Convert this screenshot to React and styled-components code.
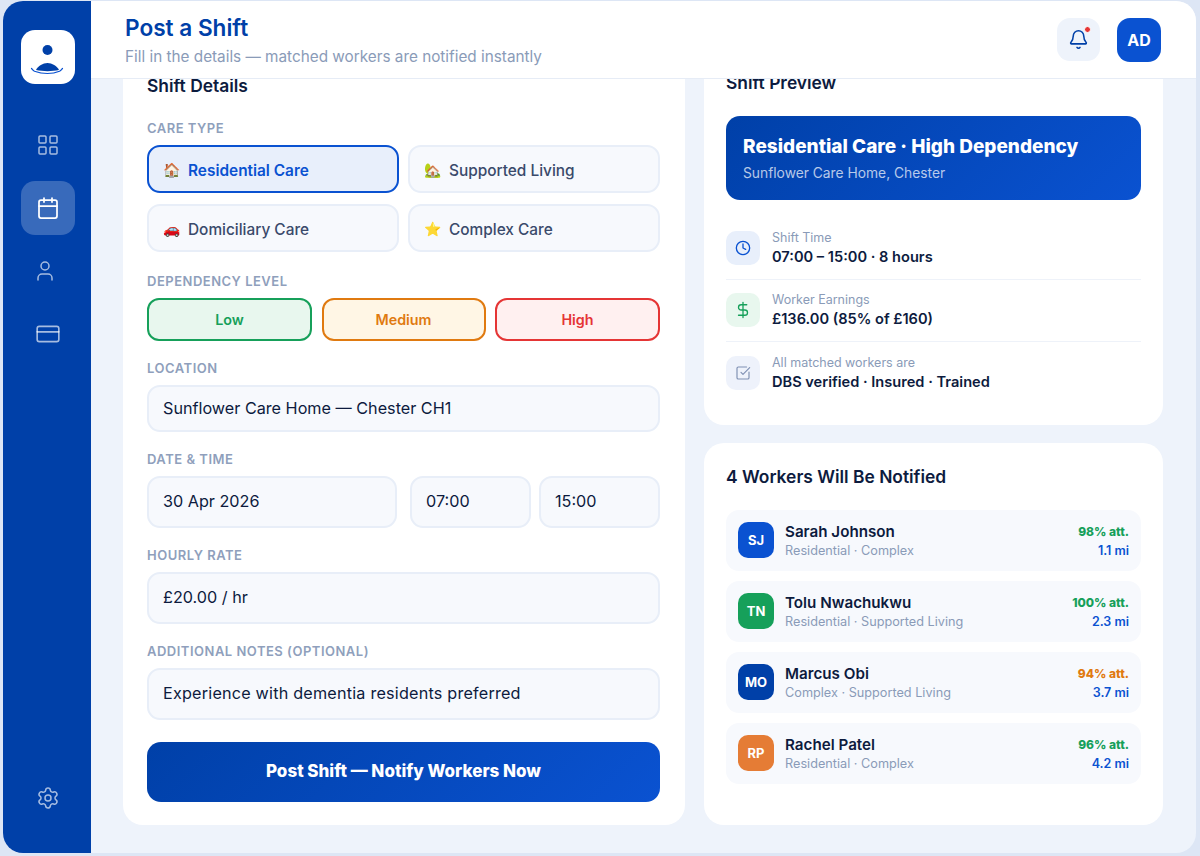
import { useEffect, useRef } from "react";
import styled, { createGlobalStyle } from "styled-components";
import { Bell, Calendar, Clock, CreditCard, DollarSign, LayoutGrid, Settings, SquareCheckBig, User } from "lucide-react";

const careTypes = [
    { icon: "🏠", name: "Residential Care", selected: true },
    { icon: "🏡", name: "Supported Living" },
    { icon: "🚗", name: "Domiciliary Care" },
    { icon: "⭐", name: "Complex Care" },
];

const levels = [
    { name: "Low", color: "#16a05a", bg: "#e8f7ee" },
    { name: "Medium", color: "#e07a10", bg: "#fff6e5" },
    { name: "High", color: "#e53535", bg: "#fff0f0" },
];

const workers = [
    { initials: "SJ", name: "Sarah Johnson", skills: "Residential · Complex", att: "98% att.", attColor: "#16a05a", miles: "1.1 mi", color: "#0a52d1" },
    { initials: "TN", name: "Tolu Nwachukwu", skills: "Residential · Supported Living", att: "100% att.", attColor: "#16a05a", miles: "2.3 mi", color: "#16a05a" },
    { initials: "MO", name: "Marcus Obi", skills: "Complex · Supported Living", att: "94% att.", attColor: "#e07a10", miles: "3.7 mi", color: "#0040a8" },
    { initials: "RP", name: "Rachel Patel", skills: "Residential · Complex", att: "96% att.", attColor: "#16a05a", miles: "4.2 mi", color: "#e57c35" },
];

const App = () => {
    const scroller = useRef(null);

    // the page is shown scrolled down to the end of the form
    useEffect(() => {
        scroller.current.scrollTop = scroller.current.scrollHeight;
    }, []);

    return (
        <Shell>
            <GlobalStyle />
            <Frame>
                <Sidebar>
                    <Logo>
                        <svg width="54" height="54" viewBox="0 0 54 54">
                            <circle cx="26.5" cy="20" r="5" fill="#0040a8" />
                            <path d="M15 40c2-4 7-7 11.500-7s9.500 3 11.500 7c-7 1.500-16 1.500-23 0z" fill="#0040a8" />
                            <path d="M10.500 38.500c1 1 1.500 2 3 2.700 8 3 18 3 25 0 1.500-.7 2-1.700 3-2.700" fill="none" stroke="#0a52d1" strokeWidth="1.200" strokeLinecap="round" />
                        </svg>
                    </Logo>
                    <NavItem><LayoutGrid size={24} strokeWidth={1.5} /></NavItem>
                    <NavItem $active><Calendar size={24} strokeWidth={1.75} /></NavItem>
                    <NavItem><UserIcon size={24} strokeWidth={1.5} /></NavItem>
                    <NavItem><CreditCard size={26} strokeWidth={1.5} /></NavItem>
                    <NavItem $bottom><Settings size={24} strokeWidth={1.5} /></NavItem>
                </Sidebar>
                <Main>
                    <Header>
                        <div>
                            <PageTitle>Post a Shift</PageTitle>
                            <PageSub>Fill in the details — matched workers are notified instantly</PageSub>
                        </div>
                        <HeaderActions>
                            <BellButton>
                                <Bell size={21} strokeWidth={1.75} />
                                <BellDot />
                            </BellButton>
                            <UserBadge>AD</UserBadge>
                        </HeaderActions>
                    </Header>
                    <Content ref={scroller}>
                        <FormCard>
                            <FormTitle>Shift Details</FormTitle>
                            <Label>CARE TYPE</Label>
                            <CareGrid>
                                {careTypes.map((care) => (
                                    <CareOption key={care.name} $selected={care.selected}>
                                        <Emoji>{care.icon}</Emoji>
                                        {care.name}
                                    </CareOption>
                                ))}
                            </CareGrid>
                            <Label>DEPENDENCY LEVEL</Label>
                            <LevelRow>
                                {levels.map((level) => (
                                    <LevelButton key={level.name} $color={level.color} $bg={level.bg}>{level.name}</LevelButton>
                                ))}
                            </LevelRow>
                            <Label>LOCATION</Label>
                            <Field $short>Sunflower Care Home — Chester CH1</Field>
                            <Label>DATE &amp; TIME</Label>
                            <DateRow>
                                <Field>30 Apr 2026</Field>
                                <Field>07:00</Field>
                                <Field>15:00</Field>
                            </DateRow>
                            <Label>HOURLY RATE</Label>
                            <Field>£20.00 / hr</Field>
                            <Label>ADDITIONAL NOTES (OPTIONAL)</Label>
                            <NotesField>Experience with dementia residents preferred</NotesField>
                            <PostButton>Post Shift — Notify Workers Now</PostButton>
                        </FormCard>
                        <SideColumn>
                            <PreviewCard>
                                <CardTitle>Shift Preview</CardTitle>
                                <Banner>
                                    <BannerTitle>Residential Care · High Dependency</BannerTitle>
                                    <BannerSub>Sunflower Care Home, Chester</BannerSub>
                                </Banner>
                                <InfoList>
                                    <InfoRow>
                                        <InfoIcon $bg="#e8effb" $color="#0a52d1"><Clock size={16} strokeWidth={2} /></InfoIcon>
                                        <div>
                                            <InfoLabel>Shift Time</InfoLabel>
                                            <InfoValue>07:00 – 15:00 · 8 hours</InfoValue>
                                        </div>
                                    </InfoRow>
                                    <InfoRow>
                                        <InfoIcon $bg="#e8f7ee" $color="#16a05a"><DollarSign size={18} strokeWidth={1.75} /></InfoIcon>
                                        <div>
                                            <InfoLabel>Worker Earnings</InfoLabel>
                                            <InfoValue>£136.00 (85% of £160)</InfoValue>
                                        </div>
                                    </InfoRow>
                                    <InfoRow>
                                        <InfoIcon $bg="#eef2fb" $color="#7f90b3"><SquareCheckBig size={16} strokeWidth={1.75} /></InfoIcon>
                                        <div>
                                            <InfoLabel>All matched workers are</InfoLabel>
                                            <InfoValue>DBS verified · Insured · Trained</InfoValue>
                                        </div>
                                    </InfoRow>
                                </InfoList>
                            </PreviewCard>
                            <WorkersCard>
                                <WorkersTitle>4 Workers Will Be Notified</WorkersTitle>
                                <WorkerList>
                                    {workers.map((worker) => (
                                        <WorkerRow key={worker.initials}>
                                            <Avatar $color={worker.color}>{worker.initials}</Avatar>
                                            <WorkerInfo>
                                                <WorkerName>{worker.name}</WorkerName>
                                                <WorkerSkills>{worker.skills}</WorkerSkills>
                                            </WorkerInfo>
                                            <WorkerStats>
                                                <Attendance $color={worker.attColor}>{worker.att}</Attendance>
                                                <Miles>{worker.miles}</Miles>
                                            </WorkerStats>
                                        </WorkerRow>
                                    ))}
                                </WorkerList>
                            </WorkersCard>
                        </SideColumn>
                    </Content>
                </Main>
            </Frame>
        </Shell>
    );
};

const GlobalStyle = createGlobalStyle`
    html, body {
        margin: 0;
        padding: 0;
        overflow: hidden;
    }
    body {
        font-family: Inter, "Liberation Sans", sans-serif;
        color: #0d1b3e;
    }
    * {
        box-sizing: border-box;
    }
`;
const Shell = styled.div`
    height: 856px;
    padding: 1px 4px 3px 3px;
    background: #dde6f5;
`;
const Frame = styled.div`
    display: flex;
    height: 100%;
    border-radius: 20px;
    overflow: hidden;
    background: #eef3fb;
`;
const Sidebar = styled.aside`
    width: 88px;
    flex: none;
    display: flex;
    flex-direction: column;
    align-items: center;
    gap: 9px;
    padding: 29px 0 28px 1px;
    background: #0040a8;
`;
const Logo = styled.div`
    width: 54px;
    height: 54px;
    margin-bottom: 25px;
    border-radius: 14px;
    background: #fff;
`;
const NavItem = styled.div`
    width: 54px;
    height: 54px;
    flex: none;
    display: flex;
    align-items: center;
    justify-content: center;
    border-radius: 14px;
    margin-top: ${(p) => (p.$bottom ? "auto" : "0")};
    color: ${(p) => (p.$active ? "#fff" : "rgba(255, 255, 255, 0.65)")};
    background: ${(p) => (p.$active ? "rgba(255, 255, 255, 0.22)" : "transparent")};
`;
const UserIcon = styled(User)`
    margin-right: 6px;
`;
const Main = styled.div`
    flex: 1;
    min-width: 0;
    display: flex;
    flex-direction: column;
`;
const Header = styled.header`
    height: 78px;
    flex: none;
    display: flex;
    align-items: center;
    justify-content: space-between;
    padding: 0 35px 0 34px;
    background: #fff;
    border-bottom: 1px solid #e6ecf6;
`;
const PageTitle = styled.h1`
    margin: 0 0 6px;
    font-size: 22.6px;
    line-height: 28px;
    font-weight: 600;
    color: #0040a8;
`;
const PageSub = styled.div`
    font-size: 15.3px;
    line-height: 18px;
    color: #8a9bb8;
`;
const HeaderActions = styled.div`
    display: flex;
    align-items: center;
    gap: 17px;
`;
const BellButton = styled.div`
    position: relative;
    width: 43px;
    height: 43px;
    display: flex;
    align-items: center;
    justify-content: center;
    border-radius: 13px;
    background: #eef3fb;
    color: #0040a8;
`;
const BellDot = styled.span`
    position: absolute;
    top: 8px;
    right: 9px;
    width: 7px;
    height: 7px;
    border-radius: 50%;
    background: #e53535;
    border: 1.5px solid #fff;
`;
const UserBadge = styled.div`
    width: 44px;
    height: 44px;
    display: flex;
    align-items: center;
    justify-content: center;
    border-radius: 13px;
    background: #0a52d1;
    color: #fff;
    font-size: 16px;
    font-weight: 700;
`;
const Content = styled.main`
    flex: 1;
    min-height: 0;
    overflow-y: auto;
    scrollbar-width: none;
    display: grid;
    grid-template-columns: 562px 459px;
    column-gap: 19px;
    align-items: stretch;
    padding: 28px 33px 28px 32px;
`;
const Card = styled.section`
    background: #fff;
    border-radius: 20px;
`;
const FormCard = styled(Card)`
    display: flex;
    flex-direction: column;
    padding: 24px 25px 23px 24px;
`;
const CardTitle = styled.h2`
    margin: 0;
    font-size: 17.4px;
    line-height: 26px;
    font-weight: 600;
    color: #0d1b3e;
`;
const FormTitle = styled(CardTitle)`
    margin-bottom: 2px;
`;
const Label = styled.div`
    margin: 19px 0 9px;
    font-size: 13px;
    line-height: 16px;
    font-weight: 600;
    letter-spacing: 0.5px;
    color: #8f9fbc;
`;
const CareGrid = styled.div`
    display: grid;
    grid-template-columns: 252px 252px;
    gap: 11px 9px;
    margin-bottom: 2px;
`;
const CareOption = styled.div`
    height: 48px;
    display: flex;
    align-items: center;
    gap: 9px;
    padding: 2px 14px 0;
    border-radius: 13px;
    border: 2px solid ${(p) => (p.$selected ? "#0a52d1" : "#e8eef8")};
    background: ${(p) => (p.$selected ? "#e8effb" : "#f7f9fd")};
    color: ${(p) => (p.$selected ? "#0a52d1" : "#3a4a6b")};
    font-size: 15.4px;
    font-weight: ${(p) => (p.$selected ? 600 : 500)};
`;
const Emoji = styled.span`
    font-size: 14px;
    width: 16px;
    font-family: "Noto Color Emoji", sans-serif;
`;
const LevelRow = styled.div`
    display: grid;
    grid-template-columns: 165px 164px 165px;
    gap: 9.5px;
`;
const LevelButton = styled.div`
    height: 43px;
    display: flex;
    align-items: center;
    justify-content: center;
    padding-bottom: 1px;
    border-radius: 12px;
    border: 2px solid ${(p) => p.$color};
    background: ${(p) => p.$bg};
    color: ${(p) => p.$color};
    font-size: 14.3px;
    font-weight: 600;
`;
const Field = styled.div`
    height: ${(p) => (p.$short ? "47px" : "52px")};
    flex: none;
    display: flex;
    align-items: center;
    padding: 0 14px 2px;
    border-radius: 13px;
    border: 2px solid #e8eef8;
    background: #f7f9fd;
    font-size: 16.2px;
    color: #0d1b3e;
`;
const NotesField = styled(Field)`
    letter-spacing: 0.2px;
`;
const DateRow = styled.div`
    display: grid;
    grid-template-columns: 255px 121px 121px;
    column-gap: 8px;
    & > :first-child {
        margin-right: 5px;
    }
`;
const PostButton = styled.button`
    display: block;
    width: 100%;
    height: 60px;
    flex: none;
    margin-top: 22px;
    padding: 0 0 2px;
    border: none;
    border-radius: 14px;
    background: linear-gradient(135deg, #0040a8, #0a52d1);
    color: #fff;
    font-family: inherit;
    font-size: 17px;
    font-weight: 800;
`;
const SideColumn = styled.div`
    display: flex;
    flex-direction: column;
    gap: 18px;
`;
const PreviewCard = styled(Card)`
    padding: 21px 22px 20px;
`;
const Banner = styled.div`
    margin-top: 20px;
    height: 84px;
    padding: 18px 17px 0;
    border-radius: 14px;
    background: linear-gradient(135deg, #0040a8, #0a52d1);
`;
const BannerTitle = styled.div`
    font-size: 19px;
    line-height: 26px;
    font-weight: 800;
    color: #fff;
`;
const BannerSub = styled.div`
    margin-top: 4px;
    font-size: 13.8px;
    line-height: 18px;
    color: rgba(255, 255, 255, 0.72);
`;
const InfoList = styled.div`
    margin-top: 17px;
`;
const InfoRow = styled.div`
    height: 62.5px;
    display: flex;
    align-items: center;
    gap: 12px;
    border-bottom: 1px solid #eef2f9;
    &:last-child {
        border-bottom: none;
    }
`;
const InfoIcon = styled.div`
    width: 34px;
    height: 34px;
    flex: none;
    display: flex;
    align-items: center;
    justify-content: center;
    border-radius: 10px;
    background: ${(p) => p.$bg};
    color: ${(p) => p.$color};
`;
const InfoLabel = styled.div`
    font-size: 12.5px;
    line-height: 18px;
    color: #8a9bb8;
`;
const InfoValue = styled.div`
    font-size: 14.6px;
    line-height: 20px;
    font-weight: 600;
    color: #0d1b3e;
`;
const WorkersCard = styled(Card)`
    flex: 1;
    padding: 21px 22px;
`;
const WorkersTitle = styled(CardTitle)`
    margin-bottom: 20px;
`;
const WorkerList = styled.div`
    display: flex;
    flex-direction: column;
    gap: 10px;
`;
const WorkerRow = styled.div`
    height: 61px;
    display: flex;
    align-items: center;
    gap: 11px;
    padding: 0 12px;
    border-radius: 13px;
    background: #f7f9fd;
`;
const Avatar = styled.div`
    width: 36px;
    height: 36px;
    flex: none;
    display: flex;
    align-items: center;
    justify-content: center;
    border-radius: 10px;
    background: ${(p) => p.$color};
    color: #fff;
    font-size: 13px;
    font-weight: 700;
`;
const WorkerInfo = styled.div`
    flex: 1;
    min-width: 0;
    margin-top: 2px;
`;
const WorkerName = styled.div`
    font-size: 15.2px;
    line-height: 19px;
    font-weight: 600;
    color: #0d1b3e;
`;
const WorkerSkills = styled.div`
    font-size: 12.7px;
    line-height: 19px;
    color: #8a9bb8;
`;
const WorkerStats = styled.div`
    text-align: right;
    margin-top: 2px;
`;
const Attendance = styled.div`
    font-size: 12px;
    line-height: 19px;
    font-weight: 800;
    color: ${(p) => p.$color};
`;
const Miles = styled.div`
    font-size: 12.5px;
    line-height: 19px;
    font-weight: 600;
    color: #0a52d1;
`;

export default App;
